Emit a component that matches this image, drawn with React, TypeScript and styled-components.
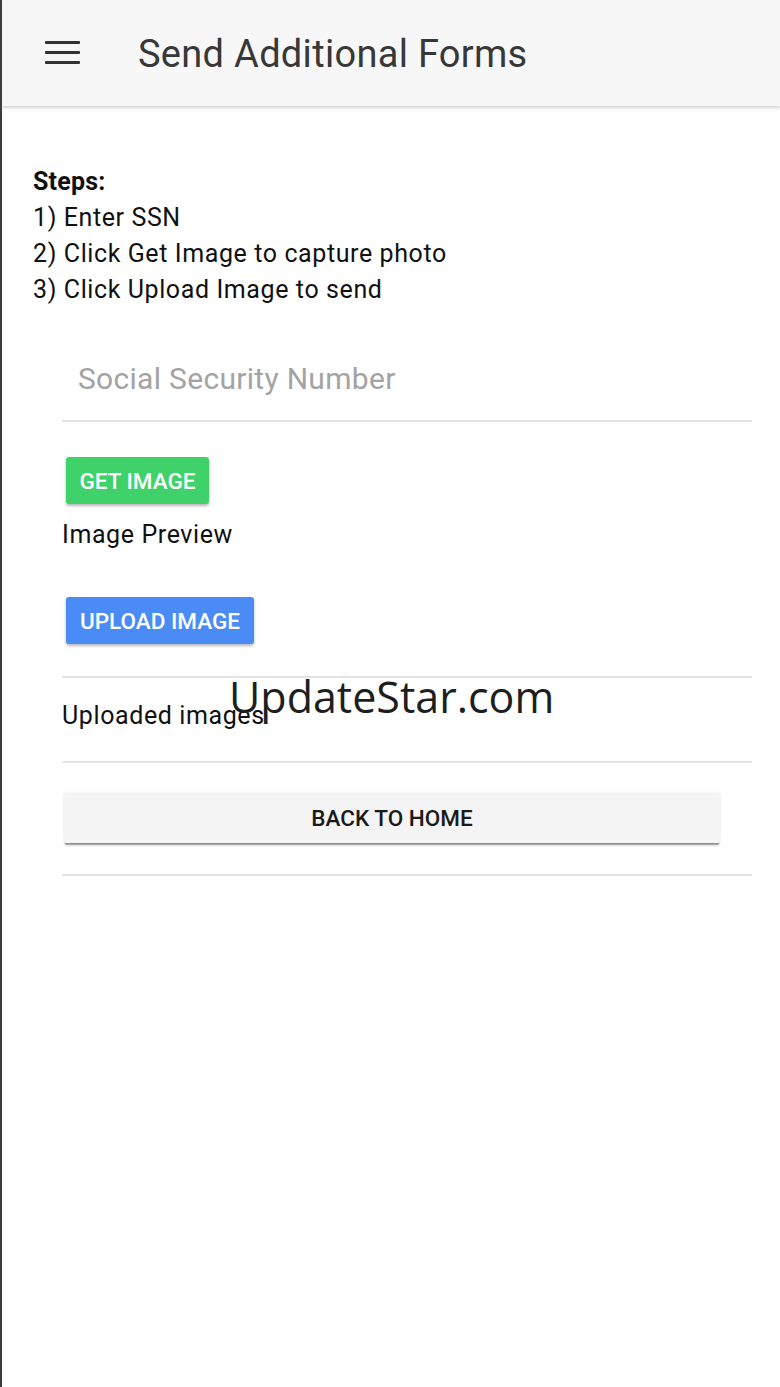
import React from 'react';
import styled, { createGlobalStyle } from 'styled-components';

const GlobalStyle = createGlobalStyle`
  html, body {
    margin: 0;
    padding: 0;
    background: #ffffff;
  }
  body {
    font-family: Roboto, "Liberation Sans", sans-serif;
  }
`;

const Screen = styled.div`
  position: relative;
  min-height: 1387px;
  border-left: 2px solid #3c3c3c;
  background: #ffffff;
  box-sizing: border-box;
  overflow: hidden;
`;

const AppBar = styled.header`
  height: 106px;
  background: #f7f7f7;
  box-shadow: 0 2px 3px rgba(0, 0, 0, 0.18);
  display: flex;
  align-items: center;
  padding-left: 43px;
  gap: 58px;
`;

const MenuIcon = styled.div`
  width: 35px;
  display: flex;
  flex-direction: column;
  gap: 7px;
  margin-top: -2px;

  span {
    display: block;
    height: 3px;
    border-radius: 1px;
    background: #333333;
  }
`;

const Title = styled.h1`
  margin: 2px 0 0 0;
  font-size: 38px;
  font-weight: 400;
  color: #383838;
  letter-spacing: 0.3px;
`;

const Content = styled.main`
  padding: 58px 28px 0 31px;
`;

const Steps = styled.div`
  font-size: 25px;
  line-height: 36px;
  letter-spacing: 0.6px;
  color: #111111;
`;

const StepsHeading = styled.div`
  font-weight: 700;
  letter-spacing: 0.2px;
`;

const Form = styled.section`
  display: flex;
  flex-direction: column;
  align-items: flex-start;
  padding-left: 29px;
`;

const Field = styled.input`
  align-self: stretch;
  box-sizing: border-box;
  margin-top: 28px;
  height: 86px;
  padding: 0 0 0 16px;
  border: none;
  border-bottom: 2px solid #e2e2e2;
  outline: none;
  background: transparent;
  font-family: Roboto, "Liberation Sans", sans-serif;
  font-size: 30px;
  letter-spacing: 0.3px;
  color: #222;

  &::placeholder {
    color: #a3a3a3;
  }
`;

const ColorButton = styled.button<{ $bg: string; $width: number; $top: number }>`
  margin: ${p => p.$top}px 0 0 4px;
  width: ${p => p.$width}px;
  height: 47px;
  padding: 0;
  border: none;
  border-radius: 3px;
  background: ${p => p.$bg};
  color: #ffffff;
  font-family: Roboto, "Liberation Sans", sans-serif;
  font-size: 22.5px;
  font-weight: 500;
  text-transform: uppercase;
  box-shadow: 0 2px 3px rgba(0, 0, 0, 0.28);
  cursor: pointer;
`;

const Label = styled.div<{ $top: number }>`
  margin-top: ${p => p.$top}px;
  font-size: 25px;
  line-height: 36px;
  letter-spacing: 0.6px;
  color: #111111;
`;

const Divider = styled.hr<{ $top: number }>`
  align-self: stretch;
  margin: ${p => p.$top}px 0 0 0;
  border: none;
  height: 2px;
  background: #e4e4e4;
`;

const HomeButton = styled.button`
  margin: 30px 0 0 2px;
  width: 656px;
  height: 50px;
  border: none;
  border-radius: 2px;
  background: #f4f4f4;
  color: #1a1a1a;
  font-family: Roboto, "Liberation Sans", sans-serif;
  font-size: 22.5px;
  font-weight: 500;
  box-shadow: 0 3px 2px -1px rgba(0, 0, 0, 0.45), 0 0 3px rgba(0, 0, 0, 0.08);
  cursor: pointer;
`;

const Watermark = styled.div`
  position: absolute;
  left: 227px;
  top: 667px;
  font-family: "Open Sans", "Noto Sans", sans-serif;
  font-size: 43px;
  color: #1e1e1e;
  pointer-events: none;
`;

const App: React.FC = () => {
  return (
    <Screen>
      <GlobalStyle />
      <AppBar>
        <MenuIcon>
          <span />
          <span />
          <span />
        </MenuIcon>
        <Title>Send Additional Forms</Title>
      </AppBar>

      <Content>
        <Steps>
          <StepsHeading>Steps:</StepsHeading>
          <div>1) Enter SSN</div>
          <div>2) Click Get Image to capture photo</div>
          <div>3) Click Upload Image to send</div>
        </Steps>

        <Form>
          <Field placeholder="Social Security Number" />
          <ColorButton $bg="#3fd26b" $width={143} $top={35}>Get Image</ColorButton>
          <Label $top={13}>Image Preview</Label>
          <ColorButton $bg="#4b8bf5" $width={188} $top={44}>Upload Image</ColorButton>
          <Divider $top={32} />
          <Label $top={20}>Uploaded images</Label>
          <Divider $top={27} />
          <HomeButton>BACK TO HOME</HomeButton>
          <Divider $top={31} />
        </Form>
      </Content>

      <Watermark>UpdateStar.com</Watermark>
    </Screen>
  );
};

export default App;
